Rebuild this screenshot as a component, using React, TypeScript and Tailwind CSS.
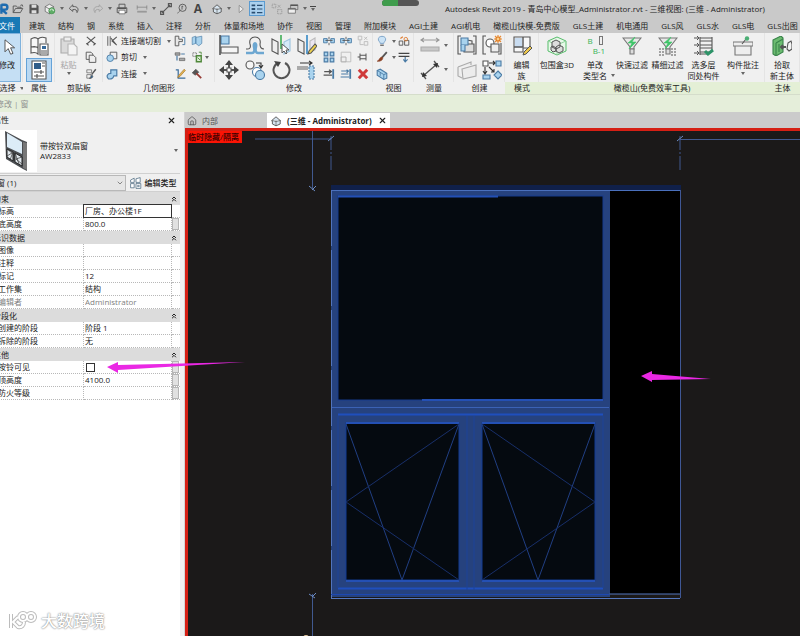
import { useState } from 'react'
import type { ReactNode } from 'react'
import { ChevronDown, ChevronsUp, Home, X } from 'lucide-react'
import clsx from 'clsx'

interface DrawingProps {
  size?: number
  children: ReactNode
}

// All the small icons are drawn on a 20 unit grid
function Drawing({ size = 20, children }: DrawingProps) {
  return (
    <svg width={size} height={size} viewBox="0 0 20 20" fill="none" stroke="#555" strokeWidth={1.1} className="shrink-0" aria-hidden="true">
      {children}
    </svg>
  )
}

function Caret() {
  return (
    <svg width="4" height="3" viewBox="0 0 4 3" className="shrink-0" aria-hidden="true">
      <path d="M0 0h4L2 3z" fill="#666" />
    </svg>
  )
}

const blue = '#a9d3ee'
const edge = '#4a7ba5'

const icons: Record<string, ReactNode> = {
  revit: <path d="M4 2v16M4 3h6a4 4 0 0 1 0 8H5l8 7" stroke="#1e6cb0" strokeWidth="4" />,
  open: <path d="M2 16V5h5l2 2h6v2M2 16l4-7h12l-4 7zM14 4l3-1 1 3" strokeWidth="1.5" />,
  save: <><path d="M3 3h12l2 2v12H3z" fill="#555" /><path d="M6 3h8v5H6zM6 12h8v5H6z" fill="#ddd" stroke="none" /></>,
  sync: <><path d="M2 6l7-4 7 4v8l-7 4-7-4z" fill="#eee" /><path d="M2 6l7 4 7-4M9 10v8" /><circle cx="13" cy="13" r="5" fill="#5fae67" stroke="#3c8f45" /><path d="M10 13a3 3 0 0 1 6 0m0 0l-2-1" stroke="#fff" /></>,
  undo: <path d="M8 3L2 9l6 5v-3c5-1 7 1 7 5 4-6 1-11-7-10z" strokeWidth="1.5" />,
  redo: <path d="M12 3l6 6-6 5v-3c-5-1-7 1-7 5-4-6-1-11 7-10z" stroke="#a3a3a3" strokeWidth="1.5" />,
  print: <><path d="M5 8V2h10v6M5 16H2V8h16v8h-3" strokeWidth="1.5" /><path d="M5 12h10v6H5z" fill="#fff" /><path d="M3 9h14" strokeWidth="2" /></>,
  span: <><path d="M2 4v7M18 4v7M2 7h16" stroke="#777" /><path d="M2 13h16v3H2z" fill="#999" stroke="none" /></>,
  line: <path d="M3 17L17 3M1 14h5v5H1zM14 1h5v5h-5z" strokeWidth="1.8" />,
  tag: <><path d="M2 17c3-1 4-3 5-6" /><circle cx="11" cy="8" r="6" strokeWidth="1.5" /><path d="M10 11V5l2 1" strokeWidth="1.5" /></>,
  box: <><path d="M2 10l8-7 8 7M4 9v6l6 3 7-3V9" fill="#d6e4ef" strokeWidth="1.5" /><path d="M10 9v9M4 9l6 2 7-2" /></>,
  section: <path d="M7 4l7 6-7 6z" fill="#eee" stroke="#777" />,
  thin: <><path d="M1 4h6M1 10h6M1 16h6" stroke="#2b4e70" strokeWidth="3" /><path d="M10 4h9M10 10h9M10 16h9" stroke="#2b4e70" strokeWidth="2" /></>,
  hidden: <><path d="M2 2h6v6H2zM11 11h7v7h-7z" stroke="#888" strokeDasharray="2 1" /><path d="M11 3l5 5M16 3l-5 5" stroke="#999" /></>,
  windows: <><path d="M6 3h12v8H6z" /><path d="M2 9h12v8H2z" fill="#eee" /><path d="M2 10h12M6 4h12" strokeWidth="2" /></>,
  cursor: <path d="M5 1v15l4-4 3 7 3-1-3-7h5z" fill="#fff" stroke="#444" />,
  types: <><path d="M2 3c3-2 5-2 7 0v8H2zM9 3c2-2 5-2 8-1v5M2 11c3-1 5-1 7 1v6c-2-2-4-2-7-1z" fill="#f8f8f8" /><path d="M11 8h8v11h-8z" fill="#fff" /><path d="M13 10h4v3h-4z" fill="#386b9b" stroke="none" /><path d="M12 15h6M12 17h6" strokeWidth="1" /></>,
  properties: <><path d="M3 1h14v18H3z" fill="#fff" /><path d="M5 3h7v6H5z" fill="#305d89" stroke="none" /><path d="M13 3h3M13 6h3M5 12h10M5 16h10M12 10v4M8 14v4" strokeWidth="1.2" /></>,
  paste: <><path d="M2 3h13v14H2z" fill="#dadada" stroke="#aaa" /><path d="M5 1h7v4H5z" fill="#eee" stroke="#aaa" /><path d="M9 8h6l3 3v8H9z" fill="#f4f4f4" stroke="#b5b5b5" /></>,
  cut: <path d="M3 3l14 12M17 3L3 15M2 14l4 3M18 14l-4 3" strokeWidth="1.8" />,
  copy: <><path d="M2 2h8l3 3v9H2z" strokeWidth="1.5" /><path d="M7 7h7l4 4v8H7z" fill="#eee" strokeWidth="1.5" /></>,
  match: <><path d="M3 3h8v5H3zM3 11h7v6H3z" fill="#eee" /><path d="M18 2l-7 9" strokeWidth="2.4" /><path d="M7 17c4 0 2-5 5-5 3 3-1 6-5 5z" fill="#2c659a" /></>,
  cope: <><path d="M3 2v16M7 2v16" strokeWidth="1.5" /><path d="M18 3l-8 7 8 7M8 5l9 11" strokeWidth="1.8" /></>,
  cutGeom: <><path d="M7 2h11v11H7z" fill="#eee" strokeWidth="1.5" /><circle cx="7" cy="12" r="5.5" fill={blue} stroke={edge} strokeWidth="1.5" /></>,
  join: <path d="M8 3h10v10h-5c-1 5-5 6-9 5-4-4-2-9 4-9z" fill={blue} stroke={edge} strokeWidth="2" />,
  wallJoin: <><path d="M2 2h6v5h6v4H8v7H2z" fill="#e8e8e8" strokeWidth="1.5" /><path d="M14 4h4v12h-4" stroke={edge} strokeWidth="1.5" /></>,
  split: <><path d="M2 4l6-2v12l-6 2zM8 4l10-2v12l-5 4-5-4z" fill={blue} stroke={edge} /></>,
  beam: <><path d="M2 3h8v4H2zM9 12h9v4H9z" fill="#aaa" /><path d="M12 5h6M5 8v8" stroke={edge} strokeWidth="2" /></>,
  demolish: <><path d="M3 3h6v6H3z" stroke="#444" strokeDasharray="2 1" /><path d="M9 8h8v10H9z" fill="#dff0d8" stroke="#50883b" strokeWidth="2.4" /><path d="M11 11l4 4M13 2h4v4" stroke="#50883b" strokeWidth="1.5" /></>,
  paint: <><path d="M3 3h4v14h12" stroke="#386b9b" strokeWidth="2" /><path d="M17 2L8 12l-2 4 4-2 9-10z" fill="#e2b351" stroke="#a5762a" /></>,
  hammer: <><path d="M2 8l6-6 5 5-6 5z" fill="#555" /><path d="M9 9l8 8" stroke="#963b34" strokeWidth="3" /></>,
  align: <><path d="M2 1h8v8H2z" fill={blue} stroke={edge} /><path d="M1 0v20" stroke="#333" strokeWidth="1.3" /><path d="M2 12h17v6H2z" fill="#f5f5f5" /></>,
  offset: <><path d="M1 14h2c2 0 3-2 2-5-1-4 1-7 5-7s6 3 5 7c0 3 1 5 4 5" /><path d="M1 18h6c2 0 3-2 2-6-1-5 3-5 2 0-1 4 0 6 2 6h6" stroke="#6da7d1" strokeWidth="2.5" /></>,
  mirrorAxis: <><path d="M1 4l6 3v12l-6-3z" fill="#eee" /><path d="M19 4l-6 3v12l6-3z" fill="#d6eaf8" stroke="#9cc3df" /><path d="M10 0v14" stroke="#3fae56" strokeWidth="1.6" /><path d="M11 9v9l2-2 2 3 1-1-1-3h3z" fill="#fff" strokeWidth="1" /></>,
  mirrorDraw: <><path d="M1 4l6 3v12l-6-3z" fill="#eee" /><path d="M18 3l-5 3v11l5-2z" fill="#ebe6f2" stroke="#bbb" /><path d="M10 0v19" stroke="#3488c5" strokeWidth="1.6" /><path d="M18 9l-6 7-1 3 3-1 6-7z" fill="#f0d34e" /></>,
  move: <><path d="M10 1v7M10 12v7M1 10h7M12 10h7" strokeWidth="2" /><path d="M10 0l4 5H6zM10 20l-4-5h8zM0 10l5-4v8zM20 10l-5 4V6z" fill="#444" stroke="none" /><path d="M8 8h4v4H8z" fill="#fff" /></>,
  copyTool: <><circle cx="5" cy="5" r="4" fill="#f6f6f6" /><path d="M11 3h5v4M14 5l2 3 2-3" stroke="#333" /><circle cx="12" cy="12" r="4.5" fill="#fff" stroke={edge} /><circle cx="15" cy="15" r="4.5" fill={blue} stroke={edge} /></>,
  rotate: <><path d="M7 3a8 8 0 1 0 7 0" strokeWidth="2" /><path d="M3 1l7 1-3 5z" fill="#444" stroke="none" /></>,
  trim: <><path d="M0 6h11v4H0z" fill="#aaa" stroke="none" /><path d="M12 6h5v13h-5z" fill={blue} stroke={edge} strokeDasharray="2 1" /><path d="M3 3h12M12 1l3 2-3 2" stroke="#333" /></>,
  splitEl: <><path d="M1 6h6v7H1zM13 6h6v7h-6z" fill={blue} stroke={edge} strokeWidth="1.5" /><path d="M4 9h12M10 3v4M10 13v4" strokeWidth="1.5" /></>,
  array: <path d="M2 2h6v6H2zM12 2h6v6h-6zM2 12h6v6H2zM12 12h6v6h-6z" fill={blue} stroke={edge} strokeWidth="2" />,
  scale: <><path d="M2 2h16v16H2z" stroke="#bbb" strokeWidth="1.5" /><path d="M2 10h8v8H2z" fill="#eee" stroke="#aaa" strokeWidth="1.5" /></>,
  pin: <path d="M5 4v12M15 4v12M5 7h10v6H5M1 10h4" strokeWidth="1.7" />,
  unpin: <><path d="M2 2h6v6H2zM12 11h6v6h-6zM5 8v8h6" stroke="#bbb" strokeWidth="1.5" /><path d="M12 3l5 5M17 3l-5 5" stroke="#bbb" strokeWidth="1.5" /></>,
  extend: <><path d="M17 2v16" stroke={edge} strokeWidth="3" /><path d="M1 12h14M2 6h11M10 3l4 3-4 3" strokeWidth="2" /></>,
  extendMulti: <><path d="M17 2v16" stroke={edge} strokeWidth="3" /><path d="M1 15h14M2 10h12M2 5h11M11 3l3 2-3 3" stroke={edge} strokeWidth="2" /></>,
  del: <path d="M3 3l14 14M17 3L3 17" stroke="#cf3a3a" strokeWidth="5" />,
  bulb: <><path d="M7 14c0-3-4-4-3-8 1-5 11-5 12 0 1 4-3 5-3 8z" fill="#cbe3f6" stroke="#779fc5" strokeWidth="1.5" /><path d="M7 17h6" strokeWidth="2" /></>,
  displace: <><path d="M2 10h6v7H2zM11 9h7v8h-7z" strokeWidth="1.5" /><circle cx="13" cy="7" r="3" stroke="#df7c30" strokeWidth="1.5" /><path d="M4 6l4-3" stroke="#df7c30" strokeWidth="2" /></>,
  brush: <><path d="M18 2l-8 9" strokeWidth="3" /><path d="M10 10c4 4-3 8-8 7 4-1 3-6 8-7z" fill="#8a3f22" stroke="#8a3f22" /></>,
  lineWork: <><path d="M1 4h18M1 9h18" stroke="#444" strokeWidth="2" /><path d="M12 10v8M9 14l3 4 4-4" stroke={edge} strokeWidth="2" /></>,
  selBox: <><path d="M2 4l5-2 11 7v8l-5 2-11-7z" fill={blue} stroke={edge} strokeWidth="1.8" /><path d="M2 4l11 7v8M13 11l5-2M7 8v5" stroke={edge} strokeWidth="1.5" /></>,
  dim: <><path d="M1 5h18M4 3L1 5l3 2M16 3l3 2-3 2" stroke="#999" /><path d="M1 12h18v4H1z" fill="#c8c8c8" stroke="#aaa" /></>,
  measure: <><path d="M3 16L17 4M1 13l5 6M14 1l5 6" strokeWidth="1.3" /><path d="M2 17l1-5 4 4zM18 3l-1 5-4-4z" fill="#333" stroke="none" /></>,
  assembly: <><path d="M4 1H1v18h3M16 1h3v18h-3" /><path d="M7 9h10v8H7z" fill="#ddd" /><path d="M10 5l5 1v3" /><path d="M4 3h7v7H4z" fill={blue} stroke={edge} /><path d="M4 10v6h4v-6" fill={blue} stroke={edge} /></>,
  group: <><path d="M4 1H1v18h3M16 19h3V8" /><circle cx="8" cy="8" r="4" fill="#fff" /><path d="M9 9h8v8H9z" fill="#eee" /><path d="M16 0v8M12 4h8M13 1l6 6M19 1l-6 6" stroke="#e98b33" /><circle cx="16" cy="4" r="2" fill="#f9d08d" stroke="#e07b20" /></>,
  similar: <><path d="M1 7l13-5v3M1 7v9l4 2M5 9l14-4v11L6 19z" fill="#ececec" stroke="#aaa" /></>,
  parts: <><path d="M1 1h5v5H1z" fill="#fff" /><path d="M1 15h7v4H1zM14 1h5v5h-5zM16 11l4 4-4 4-4-4z" fill={blue} stroke={edge} /><path d="M7 3h6M3 7v7M7 7l5 5M11 1l2 2-2 2M1 11l2 3 2-3M9 12h3V9" stroke="#333" /></>,
  editFamily: <><path d="M2 1h16v11h-7v4H2z" fill="#f8f8f8" /><path d="M3 2h7v9H3z" fill="#c9dcf0" stroke="none" /><path d="M11 1v10H2" strokeWidth="1.4" /><path d="M18 10l-6 6-1 3 3-1 6-6z" fill="#f0c94c" strokeWidth="1" /></>,
  bound: <><path d="M10 1l9 4v10l-9 4-9-4V5z" fill="#e8f8e9" stroke="#57bd6b" strokeWidth="1" /><path d="M1 5l9 4 9-4M10 9v10" stroke="#8fd49d" strokeWidth="1" /><path d="M9 4l4 2v5l-4 2-4-2V6zM12 9l4 2v4l-4 2-3-2v-4zM6 10l3 2v3l-3 1-2-2v-3z" fill="#ddd" strokeWidth="1" /></>,
  funnel: <><path d="M1 2h18l-7 9v2H8v-2z" fill="#e8e8e8" stroke="#777" /><path d="M8 13h4v5H8z" fill="#ddd" stroke="#777" /><path d="M13 1L6 7h4l-3 6 7-7h-4z" fill="#3fc569" stroke="#3fc569" strokeWidth=".6" /></>,
  fineFunnel: <><path d="M1 2h18l-7 9v2H8v-2z" fill="#e8e8e8" stroke="#777" /><path d="M8 13h4v5H8z" fill="#ddd" stroke="#777" /><path d="M1 13h6M1 16h6M1 19h6M13 13h6M13 16h6M13 19h6" strokeDasharray="2 1" /><path d="M13 1L6 7h4l-3 6 7-7h-4z" fill="#3fc569" stroke="#3fc569" strokeWidth=".6" /></>,
  floors: <><path d="M6 1v18M18 1v15M6 2h12M6 5h12M6 9h12M6 12h12M6 16h12M6 18h9" /><path d="M0 2h5M0 9h5M0 17h5M3 0l2 2-2 2M3 7l2 2-2 2M3 15l2 2-2 2" strokeWidth="1" /><path d="M11 15l3 3 5-4" stroke="#2d9368" strokeWidth="3" /></>,
  annotate: <><path d="M0 6h20v4H0zM2 10h16v9H2z" fill="#eee" stroke="#777" /><path d="M13 3L9 8" /><circle cx="14" cy="2.500" r="2.200" fill="#4baf75" stroke="none" /></>,
  host: <><path d="M1 4l8-4 2 2v14l-7 4-3-2z" fill="#6cbb70" stroke="#39834a" /><path d="M4 7v12M4 7l7-4M7 8v8" stroke="#39834a" /><path d="M9 11h5M11 9l-2 2 2 2" strokeWidth="2" /><path d="M16 7l3-2 1 3v5l-3 2-2-2z" fill="#f3f3f3" /></>,
}

interface IconButtonProps {
  icon: string
  label: string
  size?: number
  className?: string
}

function IconButton({ icon, label, size = 12, className }: IconButtonProps) {
  return (
    <button aria-label={label} className={clsx('flex items-center justify-center', className)}>
      <Drawing size={size}>{icons[icon]}</Drawing>
    </button>
  )
}

function Menu({ label, className = 'w-2' }: { label: string; className?: string }) {
  return (
    <button aria-label={label} className={clsx('flex h-4 shrink-0 items-center justify-center', className)}>
      <Caret />
    </button>
  )
}

interface PanelProps {
  title: string
  width: string
  green?: boolean
  menu?: boolean
  children: ReactNode
}

function Panel({ title, width, green, menu, children }: PanelProps) {
  return (
    <section className={clsx('flex shrink-0 flex-col', width)}>
      <div className="flex h-[49px] items-stretch justify-center border-r border-[#e4e4e4] bg-[#f0f0f0]">{children}</div>
      <h2 className={clsx('flex h-3 items-center justify-center gap-1 whitespace-nowrap', green ? 'bg-[#e4efd6]' : 'bg-[#f0f0f0]')}>
        {title}
        {menu && <Caret />}
      </h2>
    </section>
  )
}

interface BigButtonProps {
  icon: string
  lines: string[]
  width: string
  menu?: boolean
  disabled?: boolean
}

function BigButton({ icon, lines, width, menu, disabled }: BigButtonProps) {
  return (
    <button disabled={disabled} className={clsx('flex shrink-0 flex-col items-center pt-[3px] leading-[11px] whitespace-nowrap disabled:text-[#a5a5a5]', width)}>
      <Drawing>{icons[icon]}</Drawing>
      <span className="mt-[3px] flex flex-col items-center">
        {lines.map((line) => (
          <span key={line}>{line}</span>
        ))}
      </span>
      {menu && <span className="pt-[2px]"><Caret /></span>}
    </button>
  )
}

function QuickAccess() {
  return (
    <div className="flex shrink-0 items-center">
      <IconButton icon="revit" label="Revit" className="w-[10px] overflow-hidden" />
      <IconButton icon="open" label="打开" className="w-4" />
      <IconButton icon="save" label="保存" className="w-4" />
      <IconButton icon="sync" label="同步" className="w-4" />
      <Menu label="同步选项" />
      <IconButton icon="undo" label="放弃" className="w-4" />
      <Menu label="放弃列表" />
      <IconButton icon="redo" label="重做" className="w-4" />
      <Menu label="重做列表" />
      <IconButton icon="print" label="打印" className="w-4" />
      <IconButton icon="span" label="测量" className="ml-1 w-4" />
      <Menu label="测量选项" />
      <IconButton icon="line" label="对齐尺寸标注" className="w-4" />
      <IconButton icon="tag" label="按类别标记" className="w-4" />
      <button className="w-4 text-xs font-bold text-[#444]">A</button>
      <IconButton icon="box" label="默认三维视图" className="ml-[3px] w-4" />
      <Menu label="三维视图选项" />
      <IconButton icon="section" label="剖面" className="w-4" />
      <IconButton icon="thin" label="细线" className="h-[15px] w-4 border border-[#5b9bd0] bg-[#acd1ee]" />
      <IconButton icon="hidden" label="关闭非活动视图" className="ml-1 w-4" />
      <IconButton icon="windows" label="切换窗口" className="w-4" />
      <Menu label="窗口列表" />
      <button aria-label="自定义快速访问工具栏" className="flex w-2 flex-col items-center gap-px">
        <span className="h-px w-[6px] bg-[#444]" />
        <Caret />
      </button>
    </div>
  )
}

const tabs = ['建筑', '结构', '钢', '系统', '插入', '注释', '分析', '体量和场地', '协作', '视图', '管理', '附加模块', 'AGI土建', 'AGI机电', '橄榄山快模-免费版', 'GLS土建', '机电通用', 'GLS风', 'GLS水', 'GLS电', 'GLS出图']

const bigModify = [['align', '对齐'], ['offset', '偏移'], ['mirrorAxis', '镜像 - 拾取轴'], ['mirrorDraw', '镜像 - 绘制轴'], ['move', '移动'], ['copyTool', '复制'], ['rotate', '旋转'], ['trim', '修剪']]
const smallModify = [['splitEl', '拆分图元'], ['splitEl', '用间隙拆分'], ['unpin', '解锁'], ['array', '阵列'], ['scale', '缩放'], ['pin', '锁定'], ['extend', '延伸单个'], ['extendMulti', '延伸多个'], ['del', '删除']]

function Ribbon() {
  return (
    <div className="flex border-b border-[#d5ddcb] bg-[#f0f0f0]">
      <Panel title="选择" width="w-[23px]" menu>
        <button className="-ml-1 flex w-6 flex-col items-center border border-[#7fb2dd] bg-[#c5dff4] pt-[5px]">
          <Drawing size={16}>{icons.cursor}</Drawing>
          <span className="mt-1 -ml-1 whitespace-nowrap">修改</span>
        </button>
      </Panel>
      <Panel title="属性" width="w-[32px]">
        <div className="flex flex-col items-center">
          <IconButton icon="types" label="类型属性" size={20} className="h-[25px]" />
          <IconButton icon="properties" label="属性选项板" size={20} className="h-6 w-[26px] border border-[#64a2d8] bg-[#b9d8f2]" />
        </div>
      </Panel>
      <Panel title="剪贴板" width="w-[48px]">
        <BigButton icon="paste" lines={['粘贴']} width="w-6" menu disabled />
        <div className="grid grid-rows-3">
          <IconButton icon="cut" label="剪切到剪贴板" className="w-5" />
          <IconButton icon="copy" label="复制到剪贴板" className="w-5" />
          <IconButton icon="match" label="匹配类型属性" className="w-5" />
        </div>
      </Panel>
      <Panel title="几何图形" width="w-[112px]">
        <div className="grid w-[65px] grid-rows-3">
          {[['cope', '连接端切割'], ['cutGeom', '剪切'], ['join', '连接']].map(([icon, text]) => (
            <button key={text} className="flex items-center gap-[3px] whitespace-nowrap">
              <Drawing size={12}>{icons[icon]}</Drawing>
              <span className="pr-[3px]">{text}</span>
              <Caret />
            </button>
          ))}
        </div>
        <div className="grid grid-cols-[17px_17px_6px] grid-rows-3 items-center">
          <IconButton icon="wallJoin" label="墙连接" />
          <IconButton icon="split" label="拆分面" />
          <span />
          <IconButton icon="beam" label="梁/柱连接" />
          <IconButton icon="demolish" label="拆除" />
          <Menu label="拆除选项" className="w-1" />
          <IconButton icon="paint" label="填色" />
          <IconButton icon="hammer" label="拆除工具" />
        </div>
      </Panel>
      <Panel title="修改" width="w-[158px]">
        <div className="grid grid-cols-[26px_26px_26px_26px] grid-rows-2">
          {bigModify.map(([icon, label]) => (
            <IconButton key={label} icon={icon} label={label} size={20} />
          ))}
        </div>
        <div className="grid grid-cols-[17px_17px_17px] grid-rows-3">
          {smallModify.map(([icon, label]) => (
            <IconButton key={label} icon={icon} label={label} size={12} />
          ))}
        </div>
      </Panel>
      <Panel title="视图" width="w-[41px]">
        <div className="grid grid-cols-[15px_7px_15px] grid-rows-3 items-center">
          <IconButton icon="bulb" label="在视图中隐藏" />
          <Menu label="隐藏选项" className="w-2" />
          <IconButton icon="displace" label="置换图元" />
          <IconButton icon="brush" label="替换视图中的图形" />
          <Menu label="替换选项" className="w-2" />
          <IconButton icon="lineWork" label="线处理" />
          <IconButton icon="selBox" label="选择框" />
        </div>
      </Panel>
      <Panel title="测量" width="w-[40px]">
        <div className="grid grid-cols-[24px_8px] grid-rows-2 items-center">
          <IconButton icon="dim" label="对齐标注" size={20} />
          <Menu label="标注选项" />
          <IconButton icon="measure" label="测量两点" size={20} />
          <Menu label="测量方式" />
        </div>
      </Panel>
      <Panel title="创建" width="w-[51px]">
        <div className="grid grid-cols-[25px_25px] grid-rows-2">
          <IconButton icon="assembly" label="创建部件" size={20} />
          <IconButton icon="group" label="创建组" size={20} />
          <IconButton icon="similar" label="创建零件" size={20} />
          <IconButton icon="parts" label="创建类似" size={20} />
        </div>
      </Panel>
      <Panel title="模式" width="w-[34px]" green>
        <BigButton icon="editFamily" lines={['编辑', '族']} width="w-8" />
      </Panel>
      <Panel title="橄榄山(免费效率工具)" width="w-[226px]" green>
        <BigButton icon="bound" lines={['包围盒3D']} width="w-[37px]" />
        <button className="flex w-[39px] shrink-0 flex-col items-center pt-[3px] leading-[11px] whitespace-nowrap">
          <span className="grid h-5 w-5 grid-cols-2 text-[8px] leading-[10px] text-[#36b455]">
            <span>B</span>
            <span className="ml-1 h-[9px] w-1 border border-[#777]" />
            <span className="col-span-2 text-right">B-1</span>
          </span>
          <span className="mt-[3px]">单改</span>
          <span className="flex items-center gap-1 pl-2">类型名<Caret /></span>
        </button>
        <BigButton icon="funnel" lines={['快速过滤']} width="w-[35px]" />
        <BigButton icon="fineFunnel" lines={['精细过滤']} width="w-[36px]" />
        <BigButton icon="floors" lines={['选多层', '同处构件']} width="w-[36px]" />
        <BigButton icon="annotate" lines={['构件批注']} width="w-[43px]" menu />
      </Panel>
      <Panel title="主体" width="w-[35px]" green>
        <BigButton icon="host" lines={['拾取', '新主体']} width="w-8" />
      </Panel>
      <div className="flex-1" />
    </div>
  )
}

interface Property {
  name: string
  value?: string
  active?: boolean
  disabled?: boolean
  checkbox?: boolean
  button?: boolean
}

const groups: { title: string; rows: Property[] }[] = [
  { title: '约束', rows: [{ name: '标高', value: '厂房、办公楼1F', active: true }, { name: '底高度', value: '800.0', button: true }] },
  {
    title: '标识数据',
    rows: [{ name: '图像' }, { name: '注释' }, { name: '标记', value: '12' }, { name: '工作集', value: '结构' }, { name: '编辑者', value: 'Administrator', disabled: true }],
  },
  { title: '阶段化', rows: [{ name: '创建的阶段', value: '阶段 1' }, { name: '拆除的阶段', value: '无' }] },
  {
    title: '其他',
    rows: [{ name: '按铃可见', checkbox: true, button: true }, { name: '顶高度', value: '4100.0', button: true }, { name: '防火等级', button: true }],
  },
]

function PropertyRow({ row }: { row: Property }) {
  const cell = 'h-[13px] border-r border-b border-dotted border-[#b8b8b8] p-0'
  return (
    <tr className={clsx(row.disabled && 'text-[#808080]')}>
      <th scope="row" className={clsx(cell, 'pl-[5px] text-left font-normal whitespace-nowrap')}>{row.name}</th>
      <td className={cell}>
        {row.checkbox ? (
          <input type="checkbox" aria-label={row.name} className="ml-[2px] block h-[9px] w-[9px] appearance-none border border-[#333] bg-white checked:bg-[#333]" />
        ) : (
          <input
            type="text"
            aria-label={row.name}
            defaultValue={row.value}
            disabled={row.disabled}
            className={clsx('block h-3 w-full bg-transparent px-px', row.active && 'outline outline-[#333]')}
          />
        )}
      </td>
      <td className="h-[13px] border-b border-dotted border-[#b8b8b8] p-0">
        {row.button && <button aria-label={`关联${row.name}`} className="block h-3 w-[7px] border border-[#b5b5b5] bg-[#e1e1e1]" />}
      </td>
    </tr>
  )
}

function PropertiesPalette() {
  const [closed, setClosed] = useState<string[]>([])

  function toggle(title: string) {
    setClosed(closed.includes(title) ? closed.filter((t) => t !== title) : [...closed, title])
  }

  return (
    <aside className="-ml-[7px] flex w-[192px] shrink-0 flex-col border-r border-[#d4d4d4] bg-[#f0f0f0] pr-1">
      <div className="flex h-4 items-center justify-between pr-1">
        <h2>属性</h2>
        <button aria-label="关闭属性"><X size={9} strokeWidth={3} /></button>
      </div>
      <button className="flex h-[46px] items-center border-b border-[#d0d0d0] pl-[7px] text-left">
        <svg width="37" height="42" viewBox="0 0 37 42" className="bg-white" aria-hidden="true">
          <path d="M5 1l17 9 5 2v29l-4-2-17-10z" fill="#4b4e52" />
          <path d="M7 3l15 9v12L7 17z" fill="#dcecf7" />
          <path d="M7 19l6 3v9l-6-4zM15 23l7 4v9l-7-4z" fill="#e1e8ed" stroke="#222" />
          <path d="M7 19l5 4-5 3M13 22l-3 8M22 27l-6 2 6 5M15 23l4 11" stroke="#333" strokeWidth=".7" fill="none" />
          <path d="M23 12l4 1v27l-4-2z" fill="#777" />
        </svg>
        <span className="flex-1 pl-[3px] leading-[10px]">
          带按铃双扇窗
          <br />
          AW2833
        </span>
        <span className="pr-[2px]"><Caret /></span>
      </button>
      <div className="flex h-[18px] items-center border-b border-[#d0d0d0]">
        <div className="relative w-[133px]">
          <select aria-label="属性过滤器" className="block h-4 w-full appearance-none border border-[#b8b8b8] bg-[#e6e6e6] pl-[3px]">
            <option>窗 (1)</option>
          </select>
          <ChevronDown size={8} className="pointer-events-none absolute top-1 right-[2px] text-[#555]" />
        </div>
        <button className="flex flex-1 items-center justify-center gap-[3px] whitespace-nowrap">
          <Drawing size={12}>
            <path d="M1 5l6-3v7H1zM10 3l7-2v8h-7zM1 11h6v7H1zM10 11h8v8h-8zM12 14h4M12 16h4" fill="#fff" stroke="#34556f" />
          </Drawing>
          <span className="font-medium">编辑类型</span>
        </button>
      </div>
      <div className="flex-1 bg-white">
        <table className="w-full table-fixed border-separate border-spacing-0 leading-3">
          <colgroup>
            <col className="w-[91px]" />
            <col />
            <col className="w-2" />
          </colgroup>
          {groups.map((group) => (
            <tbody key={group.title}>
              <tr>
                <th colSpan={3} className="h-[13px] bg-[#dcdcdc] p-0 text-left font-normal">
                  <button onClick={() => toggle(group.title)} className="flex w-full items-center justify-between pr-[2px]">
                    {group.title}
                    <ChevronsUp size={8} strokeWidth={3} />
                  </button>
                </th>
              </tr>
              {!closed.includes(group.title) && group.rows.map((row) => <PropertyRow key={row.name} row={row} />)}
            </tbody>
          ))}
        </table>
      </div>
    </aside>
  )
}

// One leaf of the window: `flip` puts the hinge on the other side
function Casement({ x, flip }: { x: number; flip?: boolean }) {
  const near = flip ? x + 113 : x
  const far = flip ? x : x + 113
  return (
    <g>
      <rect x={x} y="423" width="113" height="157" fill="#050a10" stroke="#123b91" />
      <path d={`M${x} 423h113`} stroke="#2450b4" strokeWidth="2" />
      <path d={`M${x} 581h113`} stroke="#2450b4" strokeWidth="2" />
      <path d={`M${x} 424L${x + 56} 580L${x + 113} 424`} stroke="#213f83" fill="none" />
      <path d={`M${far} 424L${near} 502L${far} 580`} stroke="#182f69" fill="none" />
    </g>
  )
}

function Viewport() {
  return (
    <main className="flex min-w-0 flex-1 flex-col bg-[#cbcbcb]">
      <div className="flex h-4 items-stretch pt-px">
        <button className="flex w-[82px] items-center gap-[5px] pl-[2px] text-[#555]">
          <Home size={10} />
          内部
        </button>
        <div className="flex items-center gap-[6px] bg-white px-[3px] font-bold whitespace-nowrap">
          <button className="flex items-center gap-[5px]">
            <Drawing size={12}>{icons.box}</Drawing>
            (三维 - Administrator)
          </button>
          <button aria-label="关闭视图"><X size={9} strokeWidth={3} /></button>
        </div>
      </div>
      <div className="relative flex-1 overflow-hidden border-t-[3px] border-l-[3px] border-[#d51f14] bg-[#1b1919]">
        <span className="absolute top-0 left-0 bg-[#fb1405] pr-[3px] leading-3 font-medium text-[#360000]">临时隐藏/隔离</span>
        <svg width="612" height="505" viewBox="188 131 612 505" fill="none" role="img" aria-label="三维视图">
          {/* dimension lines */}
          <path d="M255 139h76M312.500 131v57M680 139.500h120M312.500 594v42" stroke="#41598f" />
          <path d="M331 136v34M680 136v34" stroke="#41598f" strokeDasharray="14 2 2 2" />
          <path d="M328 141l6-5M677 141l6-5M309 186l6 5M312 190l4-4M309 594l6 4M312 597l4-4" stroke="#6c8cc4" />

          {/* wall opening */}
          <rect x="331" y="185" width="350" height="6" fill="#10204a" />
          <rect x="609" y="191" width="71" height="403" fill="#000" />
          <rect x="331" y="191" width="279" height="406" fill="#26427e" />
          <path d="M331 190.500H680" stroke="#4a70bd" />
          <path d="M680.500 190V598" stroke="#3f5795" />
          <path d="M331.500 190V598" stroke="#5274bc" strokeDasharray="56 4" />
          <path d="M609.500 594H680M331 598.500H680" stroke="#5577bd" />
          <path d="M331 594.500H609" stroke="#1d48b0" />

          {/* upper pane */}
          <rect x="338" y="196" width="265" height="204" fill="#050a10" stroke="#163a8c" />
          <path d="M338 196.500h160M422 400h181" stroke="#2450b4" strokeWidth="2" />

          {/* lower frame */}
          <path d="M332 407.500H609" stroke="#3b62b5" />
          <path d="M338 414.500H603M338 588.500H603" stroke="#1f4fbd" strokeWidth="2" />
          <path d="M338 416V588M603 416V588M467 416V590M474 416V590" stroke="#1c4398" />
          <Casement x={346} />
          <Casement x={482} flip />
          <path d="M641 376l11-5v3l59 5-59 1v2z" fill="#ea28e4" />
          <circle cx="306" cy="638" r="3" fill="#e6c9a0" />
        </svg>
      </div>
    </main>
  )
}

export default function App() {
  return (
    <div className="relative flex min-h-screen flex-col overflow-hidden bg-[#f0f0f0] font-['Open_Sans','Noto_Sans_CJK_SC',sans-serif] text-[8px] leading-3 text-[#222]">
      <header className="bg-[#c9c9c9]">
        <div className="flex h-[17px] items-center">
          <QuickAccess />
          <div className="ml-[65px] flex h-[6px] w-[37px] shrink-0 self-start overflow-hidden rounded-full bg-[#555]">
            <span className="w-4 bg-[#3f9c4c]" />
          </div>
          <h1 className="ml-[26px] whitespace-nowrap">Autodesk Revit 2019 - 青岛中心模型_Administrator.rvt - 三维视图: (三维 - Administrator)</h1>
        </div>
        <nav className="flex h-4 items-center gap-[13px] whitespace-nowrap">
          <button className="-mr-1 flex h-full w-5 items-center justify-end bg-[#1979b5] pr-[5px] pt-px text-white">文件</button>
          {tabs.map((tab) => (
            <button key={tab} className="pt-px">{tab}</button>
          ))}
        </nav>
      </header>
      <Ribbon />
      <div className="flex h-[17px] items-center bg-[#e5eeda] text-[#909090]">
        <span className="-ml-1">修改 | 窗</span>
      </div>
      <div className="flex flex-1">
        <PropertiesPalette />
        <Viewport />
      </div>

      <svg width="138" height="12" viewBox="0 0 138 12" className="pointer-events-none absolute top-[361px] left-[107px]" aria-hidden="true">
        <path d="M0 6l11-5v3l127-3L11 9v3z" fill="#ea28e4" />
      </svg>
      <div className="absolute bottom-[5px] left-2 flex items-center gap-1 text-base leading-5 font-medium text-white [text-shadow:0_0_2px_#888,0_0_1px_#999]">
        <svg width="29" height="20" viewBox="0 0 29 20" fill="none" aria-hidden="true">
          <g stroke="#bcbcbc" strokeWidth="4">
            <path d="M3 3v14M10 6l-5 5 5 5c4 1 6-2 6-5" />
            <circle cx="15" cy="6" r="4" />
            <circle cx="23" cy="6" r="4" />
          </g>
          <g stroke="#fff" strokeWidth="2">
            <path d="M3 3v14M10 6l-5 5 5 5c4 1 6-2 6-5" />
            <circle cx="15" cy="6" r="4" />
            <circle cx="23" cy="6" r="4" />
          </g>
        </svg>
        大数跨境
      </div>
    </div>
  )
}
